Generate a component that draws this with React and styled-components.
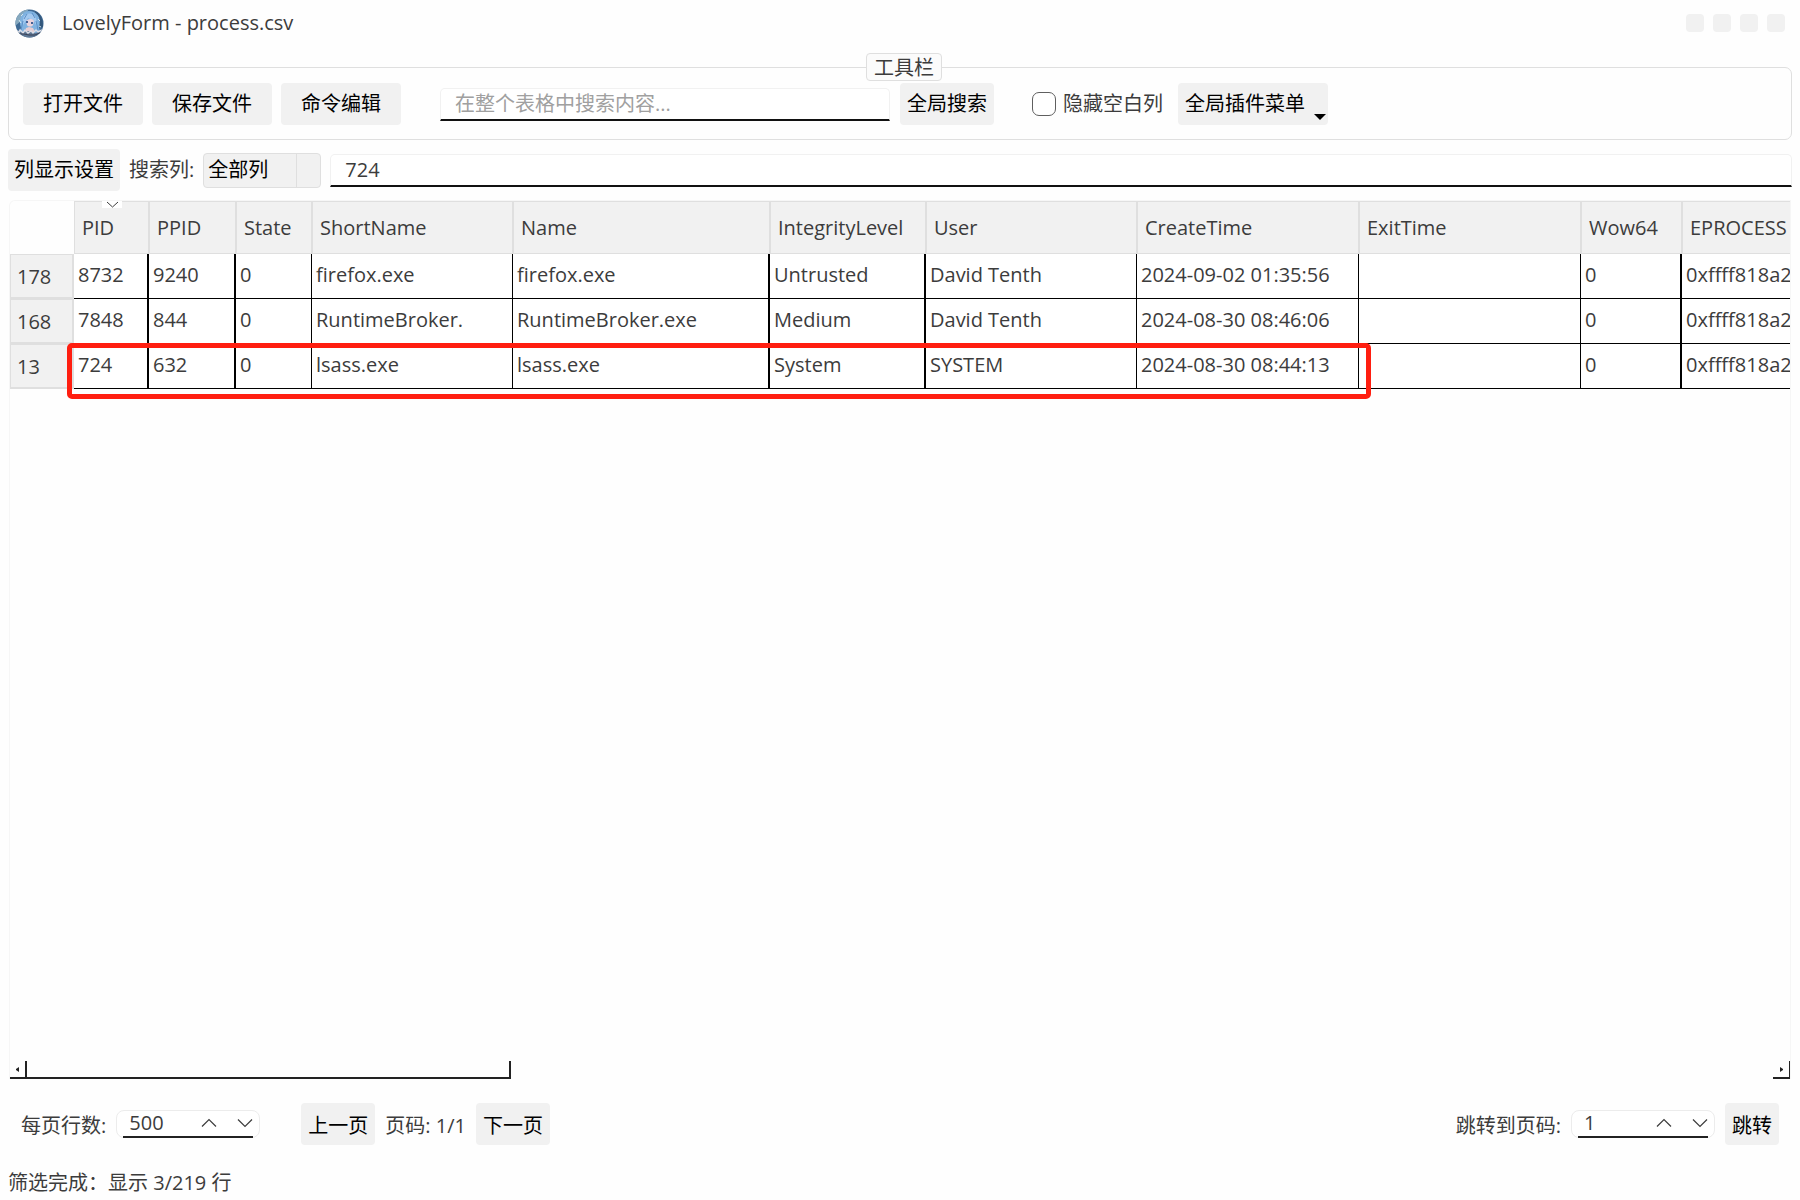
import React from "react";
import styled, { createGlobalStyle } from "styled-components";

const ink = "#3c3c3c";
const panel = "#f1f1f1";
const line = "#dfdfdf";

const GlobalStyle = createGlobalStyle`
  *, *::before, *::after { box-sizing: border-box; }
  body {
    margin: 0;
    background: #fefefe;
    color: ${ink};
    font: 20px/28px "Open Sans", "Noto Sans CJK SC", sans-serif;
  }
  button, input, select { font: inherit; color: inherit; margin: 0; }
`;

const Window = styled.div`
  display: flex;
  flex-direction: column;
  min-height: 100vh;
  padding: 0 8px;
`;

const TitleBar = styled.header`
  display: flex;
  align-items: center;
  justify-content: space-between;
  height: 46px;
  padding: 0 7px;
`;

const TitleGroup = styled.div`
  display: flex;
  align-items: center;
  gap: 18px;
`;

const Title = styled.h1`
  margin: 0;
  font-size: 20px;
  font-weight: 400;
`;

const WindowControls = styled.div`
  display: flex;
  gap: 9px;
`;

const WindowButton = styled.button`
  width: 18px;
  height: 18px;
  padding: 0;
  border: 0;
  border-radius: 4px;
  background: ${panel};
`;

const Toolbar = styled.fieldset`
  min-width: 0;
  height: 87px;
  margin: 7px 0 0;
  padding: 2px 6px 2px 14px;
  border: 1px solid ${line};
  border-radius: 7px;
`;

const ToolbarLegend = styled.legend`
  margin: 0 auto;
  padding: 0 7px;
  height: 28px;
  border: 1px solid ${line};
  border-radius: 4px;
  background: #fbfbfb;
  line-height: 28px;
`;

const ToolbarRow = styled.div`
  display: flex;
  align-items: center;
`;

const ButtonGroup = styled.div`
  display: flex;
  gap: 9px;
  margin-right: 39px;
`;

const Button = styled.button`
  position: relative;
  flex: none;
  height: 42px;
  padding: 0 ${(p) => (p.$wide ? 20 : 7)}px;
  border: 0;
  border-radius: 4px;
  background: ${panel};
  color: #000;
  white-space: nowrap;
`;

const ColumnsButton = styled(Button)`
  padding: 0 6px;
`;

const PagerButton = styled(Button)`
  padding-top: 4px;
`;

const MenuButton = styled(Button)`
  padding-right: 23px;
`;

const MenuArrow = styled.svg`
  position: absolute;
  right: 2px;
  bottom: 5px;
`;

const TextField = styled.input`
  flex: ${(p) => (p.$grow ? "1" : "none")};
  width: ${(p) => (p.$grow ? "auto" : "450px")};
  min-width: 0;
  height: 33px;
  padding: 0 14px;
  border: 1px solid ${panel};
  border-bottom: 2px solid #111;
  border-radius: 5px 5px 0 0;
  outline: 0;
  background: #fff;
  &::placeholder { color: #a0a0a0; opacity: 1; }
`;

const SearchGroup = styled.div`
  display: flex;
  align-items: center;
  gap: 10px;
  margin-right: 38px;
`;

const CheckLabel = styled.label`
  display: flex;
  align-items: center;
  gap: 7px;
  margin-right: 15px;
  white-space: nowrap;
`;

const Checkbox = styled.input`
  appearance: none;
  width: 24px;
  height: 24px;
  border: 1px solid #5f5f5f;
  border-radius: 7px;
  background: #fff;
`;

const FilterRow = styled.div`
  display: flex;
  align-items: center;
  gap: 9px;
  padding: 9px 0;
`;

const FieldLabel = styled.label`
  white-space: nowrap;
`;

const ColumnPicker = styled.div`
  display: flex;
  flex: none;
  width: 118px;
  height: 35px;
  border: 1px solid ${line};
  border-radius: 4px;
  background: linear-gradient(${line}, ${line}) 92px 0 / 1px 100% no-repeat ${panel};
`;

const ColumnSelect = styled.select`
  appearance: none;
  width: 100%;
  height: 100%;
  padding: 0 0 0 4px;
  border: 0;
  background: transparent;
  color: #000;
  outline: 0;
`;

const TableArea = styled.main`
  position: relative;
  flex: 1;
  display: flex;
  flex-direction: column;
  margin: 0 1px;
  border: 1px solid #f6f6f6;
  border-bottom: 0;
  border-radius: 6px 0 0 0;
  overflow: hidden;
`;

const DataTable = styled.table`
  flex: none;
  width: 1900px;
  table-layout: fixed;
  border-collapse: separate;
  border-spacing: 0;
`;

const Corner = styled.td`
  padding: 0;
`;

const HeadCell = styled.th`
  position: relative;
  height: 53px;
  padding: 0 7px;
  border: 1px solid ${line};
  background: ${panel};
  font-weight: 400;
  text-align: left;
  white-space: nowrap;
`;

const SortMark = styled.svg`
  position: absolute;
  left: 27px;
  top: -1px;
  background: #fff;
`;

const RowHead = styled.th`
  height: 45px;
  padding: 1px 6px 0;
  border: 1px solid ${line};
  border-bottom-width: 2px;
  border-right-width: 2px;
  background: ${panel};
  font-weight: 400;
  text-align: left;
`;

const Cell = styled.td`
  height: 45px;
  padding: 0 4px 3px;
  border-right: ${(p) => (p.$thick ? 2 : 1)}px solid #000;
  border-bottom: 1px solid #000;
  background: #fff;
  white-space: nowrap;
`;

const Highlight = styled.div`
  position: absolute;
  left: 57px;
  top: 142px;
  width: 1304px;
  height: 56px;
  border: 5px solid #ff1e10;
  border-radius: 5px;
`;

const ScrollTrack = styled.div`
  display: flex;
  height: 18px;
  margin: auto -1px 0;
`;

const ScrollButton = styled.button`
  display: flex;
  align-items: center;
  justify-content: center;
  width: 18px;
  padding: 0;
  border: 0 solid #222;
  border-right-width: 2px;
  border-bottom-width: 2px;
  background: transparent;
`;

const ScrollThumb = styled.div`
  width: 484px;
  margin-right: auto;
  border: 0 solid #222;
  border-right-width: 2px;
  border-bottom-width: 2px;
`;

const Pager = styled.nav`
  display: flex;
  align-items: center;
  gap: 10px;
  height: 66px;
  margin: 12px 0 0;
  padding: 0 13px;
`;

const PagerLabel = styled(FieldLabel)`
  padding-top: 4px;
`;

const Spacer = styled.span`
  flex: ${(p) => (p.$fixed ? "0 0 21px" : "1")};
`;

const Stepper = styled.div`
  display: flex;
  align-items: center;
  flex: none;
  width: 144px;
  height: 28px;
  padding: 0 6px;
  border: 1px solid #ececec;
  border-radius: 8px;
  background: #fff;
`;

const StepperBody = styled.div`
  display: flex;
  align-items: center;
  gap: 20px;
  width: 100%;
  height: 28px;
  border-bottom: 2px solid #222;
`;

const StepperInput = styled.input`
  flex: 1;
  min-width: 0;
  height: 24px;
  padding: 0 0 0 6px;
  border: 0;
  outline: 0;
  background: transparent;
`;

const StepButton = styled.button`
  display: flex;
  justify-content: center;
  width: 16px;
  padding: 0;
  border: 0;
  background: transparent;
`;

const StatusBar = styled.footer`
  padding: 12px 0 3px;
`;

function Chevron({ down }) {
  return (
    <svg width="16" height="10" viewBox="0 0 16 10" fill="none" stroke="#3c3c3c" strokeWidth="1.2">
      <path d={down ? "M1 1.5 8 8.5 15 1.5" : "M1 8.5 8 1.5 15 8.5"} />
    </svg>
  );
}

function Avatar() {
  return (
    <svg width="29" height="29" viewBox="0 0 29 29" aria-hidden="true">
      <defs>
        <clipPath id="avatar-disc"><circle cx="14.5" cy="14.5" r="14" /></clipPath>
      </defs>
      <g clipPath="url(#avatar-disc)">
        <rect width="29" height="29" fill="#3f6a94" />
        <path d="M0 0h14L6 12 0 17z" fill="#86a9bf" />
        <path d="M20 2c6 3 8 9 8 16l-4 1-3-9z" fill="#34587c" />
        <path d="M6 19C3 9 7 2 14 2s13 6 10 16l1 5-5 2H8l-4-2z" fill="#7fb2e0" />
        <path d="M8 9c3-6 10-6 13 0l1 9-3-6-6-3-5 7z" fill="#a3c9ef" />
        <path d="M8 12l-2 9M21 12l2 9M12 5l-3 5M17 4l3 5" fill="none" stroke="#5d8fc6" />
        <path d="M11 12c2-2 6-3 8 0l-1 4c-1 2-5 2-6 0z" fill="#e9d3dc" />
        <path d="M12 12v2M17 13v2" stroke="#34558c" strokeWidth="1.8" />
        <path d="M11 19l3-1 4 1 2 4-5 1-5-1z" fill="#e6cdd2" />
        <path d="M1 21l5 2 7-1 8 2 7-4-2 9H4z" fill="#5d7794" />
        <path d="M1 21l3 2 1-2 3 3 2-3 3 3 3-2 2 2 3-3 2 2 4-2" fill="none" stroke="#dcdde6" strokeWidth="1.4" />
        <path d="M1 23l4 2 4 0 5 1 6 0 7-3" fill="none" stroke="#3d4257" />
        <path d="M4 11l2 3M23 10l2 2M6 7l2-2M24 17l2 1" stroke="#d2e5ef" />
      </g>
    </svg>
  );
}

const columns = [
  { name: "PID", width: 75, thick: true, sorted: true },
  { name: "PPID", width: 87, thick: true },
  { name: "State", width: 76 },
  { name: "ShortName", width: 201 },
  { name: "Name", width: 257, thick: true },
  { name: "IntegrityLevel", width: 156, thick: true },
  { name: "User", width: 211 },
  { name: "CreateTime", width: 222 },
  { name: "ExitTime", width: 222 },
  { name: "Wow64", width: 101, thick: true },
  { name: "EPROCESS", width: 228 },
];

const rows = [
  ["178", "8732", "9240", "0", "firefox.exe", "firefox.exe", "Untrusted", "David Tenth", "2024-09-02 01:35:56", "", "0", "0xffff818a2"],
  ["168", "7848", "844", "0", "RuntimeBroker.", "RuntimeBroker.exe", "Medium", "David Tenth", "2024-08-30 08:46:06", "", "0", "0xffff818a2"],
  ["13", "724", "632", "0", "lsass.exe", "lsass.exe", "System", "SYSTEM", "2024-08-30 08:44:13", "", "0", "0xffff818a2"],
];

function NumberStepper({ id, value }) {
  return (
    <Stepper>
      <StepperBody>
        <StepperInput id={id} defaultValue={value} inputMode="numeric" />
        <StepButton type="button"><Chevron /></StepButton>
        <StepButton type="button"><Chevron down /></StepButton>
      </StepperBody>
    </Stepper>
  );
}

export default function App() {
  return (
    <Window>
      <GlobalStyle />
      <TitleBar>
        <TitleGroup>
          <Avatar />
          <Title>LovelyForm - process.csv</Title>
        </TitleGroup>
        <WindowControls>
          <WindowButton /><WindowButton /><WindowButton /><WindowButton />
        </WindowControls>
      </TitleBar>

      <Toolbar>
        <ToolbarLegend>工具栏</ToolbarLegend>
        <ToolbarRow>
          <ButtonGroup>
            <Button $wide>打开文件</Button>
            <Button $wide>保存文件</Button>
            <Button $wide>命令编辑</Button>
          </ButtonGroup>
          <SearchGroup>
            <TextField placeholder="在整个表格中搜索内容..." />
            <Button>全局搜索</Button>
          </SearchGroup>
          <CheckLabel><Checkbox type="checkbox" />隐藏空白列</CheckLabel>
          <MenuButton>
            全局插件菜单
            <MenuArrow width="12" height="6" viewBox="0 0 12 6"><path d="M0 0h12L6 6z" /></MenuArrow>
          </MenuButton>
        </ToolbarRow>
      </Toolbar>

      <FilterRow>
        <ColumnsButton>列显示设置</ColumnsButton>
        <FieldLabel htmlFor="column">搜索列:</FieldLabel>
        <ColumnPicker>
          <ColumnSelect id="column"><option>全部列</option></ColumnSelect>
        </ColumnPicker>
        <TextField $grow defaultValue="724" />
      </FilterRow>

      <TableArea>
        <DataTable>
          <colgroup>
            <col style={{ width: 64 }} />
            {columns.map((c) => <col key={c.name} style={{ width: c.width }} />)}
          </colgroup>
          <thead>
            <tr>
              <Corner />
              {columns.map((c) => (
                <HeadCell key={c.name}>
                  {c.name}
                  {c.sorted && (
                    <SortMark width="20" height="7" viewBox="0 0 20 7" fill="none" stroke="#3c3c3c">
                      <path d="M5 1l5.500 5L16 1" />
                    </SortMark>
                  )}
                </HeadCell>
              ))}
            </tr>
          </thead>
          <tbody>
            {rows.map(([id, ...cells]) => (
              <tr key={id}>
                <RowHead>{id}</RowHead>
                {cells.map((text, i) => <Cell key={columns[i].name} $thick={columns[i].thick}>{text}</Cell>)}
              </tr>
            ))}
          </tbody>
        </DataTable>
        <Highlight />
        <ScrollTrack>
          <ScrollButton><svg width="3" height="5" viewBox="0 0 3 5"><path d="M3 0v5L0 3V2z" fill="#222" /></svg></ScrollButton>
          <ScrollThumb />
          <ScrollButton><svg width="3" height="5" viewBox="0 0 3 5"><path d="M0 0v5l3-2V2z" fill="#222" /></svg></ScrollButton>
        </ScrollTrack>
      </TableArea>

      <Pager>
        <PagerLabel htmlFor="page-size">每页行数:</PagerLabel>
        <NumberStepper id="page-size" value="500" />
        <Spacer $fixed />
        <PagerButton>上一页</PagerButton>
        <PagerLabel as="span">页码: 1/1</PagerLabel>
        <PagerButton>下一页</PagerButton>
        <Spacer />
        <PagerLabel htmlFor="page-number">跳转到页码:</PagerLabel>
        <NumberStepper id="page-number" value="1" />
        <PagerButton>跳转</PagerButton>
      </Pager>
      <StatusBar>筛选完成：显示 3/219 行</StatusBar>
    </Window>
  );
}
